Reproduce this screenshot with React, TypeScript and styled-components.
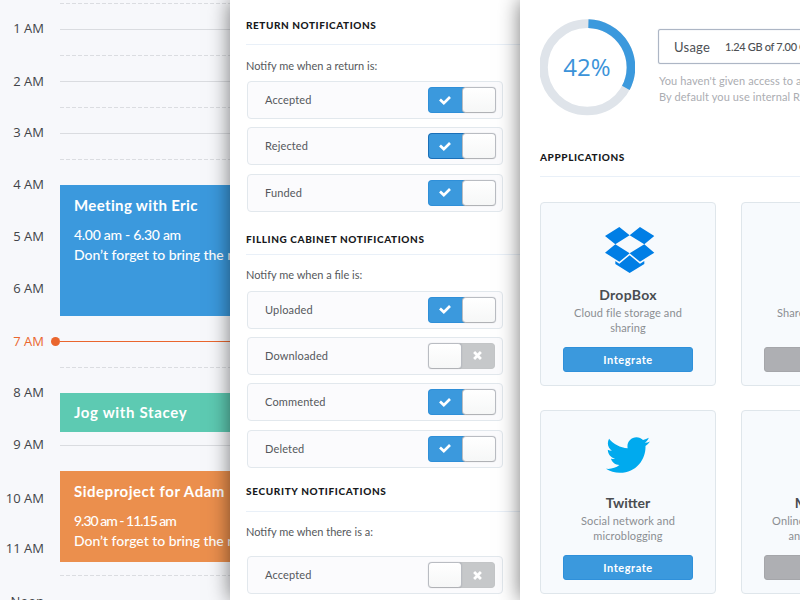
import React from 'react';
import styled, { createGlobalStyle } from 'styled-components';
import { FaTwitter } from 'react-icons/fa';

const GlobalStyle = createGlobalStyle`
  * { box-sizing: border-box; }
  body { margin: 0; background: #fff; overflow: hidden; }
`;

const Page = styled.main`
  display: flex;
  width: 800px;
  height: 600px;
  overflow: hidden;
  font-family: Lato, "Open Sans", sans-serif;
  color: #55585c;
`;

const Panel = styled.section<{ $width: number; $layer: number }>`
  position: relative;
  z-index: ${p => p.$layer};
  flex: 0 0 ${p => p.$width}px;
  width: ${p => p.$width}px;
  height: 600px;
  background: #fff;
  box-shadow: 0 0 20px rgba(0, 0, 0, 0.53);
`;

/* Calendar */

const CalendarPanel = styled(Panel)`
  display: flex;
  background: #f7f8fb;
  box-shadow: none;
`;

const Hours = styled.div`
  flex: 0 0 60px;
  height: 600px;
  overflow: hidden;
  padding: 19px 16px 0 0;
`;

const Hour = styled.div<{ $slot: number; $now?: boolean }>`
  height: ${p => p.$slot}px;
  font: 13px/18px "Open Sans", sans-serif;
  text-align: right;
  white-space: nowrap;
  color: ${p => (p.$now ? '#ea662e' : '#424448')};
`;

const Timeline = styled.div`
  flex: 1;
  min-width: 0;
  height: 600px;
  padding-top: 3px;
  display: grid;
  grid-template-columns: 100%;
  grid-template-rows: repeat(23, 26px);
`;

const Line = styled.div<{ $row: number; $dashed?: boolean }>`
  grid-area: ${p => p.$row} / 1;
  height: 1px;
  background: ${p =>
    p.$dashed ? 'repeating-linear-gradient(90deg, #dbdde1 0 4px, transparent 4px 6px)' : '#dadce0'};
`;

const NowMarker = styled.div`
  grid-area: 14 / 1;
  display: flex;
  align-items: center;
  height: 9px;
  margin: -4px 0 0 -9px;
`;

const NowDot = styled.span`
  width: 9px;
  height: 9px;
  border-radius: 50%;
  background: #ea662e;
`;

const NowLine = styled.span`
  flex: 1;
  height: 1px;
  background: #ea662e;
`;

const Event = styled.article<{ $row: number; $height: number; $color: string; $top: number }>`
  grid-area: ${p => p.$row} / 1;
  height: ${p => p.$height}px;
  padding: ${p => p.$top}px 0 0 14px;
  background: ${p => p.$color};
  color: #fff;
  white-space: nowrap;
  overflow: hidden;
`;

const EventTitle = styled.h3<{ $spacing: number }>`
  margin: 0 0 10px;
  font-size: 15px;
  line-height: 20px;
  font-weight: 700;
  letter-spacing: ${p => p.$spacing}px;
`;

const EventText = styled.p<{ $spacing: number }>`
  margin: 0;
  font-size: 14px;
  line-height: 20px;
  font-weight: 500;
  letter-spacing: ${p => p.$spacing}px;
`;

/* Notifications */

const NotificationPanel = styled(Panel)`
  padding-left: 16px;
`;

const Group = styled.div<{ $height: number }>`
  height: ${p => p.$height}px;
`;

const Heading = styled.h2<{ $pad: number; $height: number; $spacing: number }>`
  margin: 0;
  height: ${p => p.$height}px;
  padding-top: ${p => p.$pad}px;
  border-bottom: 1px solid #e9f0f8;
  font-size: 10px;
  line-height: 12px;
  font-weight: 900;
  letter-spacing: ${p => p.$spacing}px;
  color: #17191c;
`;

const Prompt = styled.p<{ $pad: number; $height: number }>`
  margin: 0;
  height: ${p => p.$height}px;
  padding-top: ${p => p.$pad}px;
  font-size: 11px;
  line-height: 14px;
  color: #55585c;
`;

const Options = styled.div`
  display: flex;
  flex-direction: column;
  gap: 8.4px;
  padding-left: 1px;
`;

const Option = styled.div`
  display: flex;
  align-items: center;
  justify-content: space-between;
  width: 256px;
  height: 38px;
  padding: 0 6px 0 17px;
  border: 1px solid #e2e8ed;
  border-radius: 4px;
  background: #fbfbfd;
  font-size: 11px;
  line-height: 14px;
  letter-spacing: 0.15px;
`;

const Switch = styled.span<{ $on: boolean }>`
  display: flex;
  flex-direction: ${p => (p.$on ? 'row' : 'row-reverse')};
  width: 68px;
  height: 26px;
  padding-right: ${p => (p.$on ? 0 : 1)}px;
`;

const SwitchTrack = styled.span<{ $on: boolean; $focused?: boolean }>`
  flex: 1;
  display: flex;
  align-items: center;
  justify-content: center;
  margin: ${p => (p.$on ? '0 -3px 0 0' : '0 0 0 -3px')};
  padding: ${p => (p.$on ? '0 5px 0 0' : '0 0 0 2px')};
  border: 1px solid ${p => (p.$on ? (p.$focused ? '#1a6fb8' : '#2f8fd8') : '#c3c5c7')};
  border-width: ${p => (p.$on ? '1px 0 1px 1px' : '1px 1px 1px 0')};
  border-radius: ${p => (p.$on ? '4px 0 0 4px' : '0 4px 4px 0')};
  background: ${p => (p.$on ? '#3b99dd' : '#c6c8ca')};
`;

const Knob = styled.span`
  z-index: 1;
  width: 34px;
  border: 1px solid #b9bcc2;
  border-bottom-color: #b0b2b6;
  border-radius: 4px;
  background: linear-gradient(#fff, #f6f7f7);
  box-shadow: 0 0 1px rgba(100, 105, 115, 0.4);
`;

const Glyph = styled.svg`
  display: block;
`;

/* Storage */

const StoragePanel = styled(Panel)`
  padding-left: 20px;
`;

const Usage = styled.div`
  display: flex;
  height: 145px;
  padding-top: 19px;
  overflow: hidden;
`;

const Donut = styled.div`
  display: grid;
  flex: 0 0 96px;
  width: 96px;
  height: 97px;
  margin: 0 1px 0 -1px;
  place-items: center;
  > * { grid-area: 1 / 1; }
`;

const Percent = styled.span`
  font: 24px/30px "Open Sans", sans-serif;
  color: #3b93d9;
  padding-bottom: 2px;
`;

const UsageInfo = styled.div`
  flex: 1;
  min-width: 0;
  padding: 10px 0 0 22px;
  white-space: nowrap;
`;

const UsageBox = styled.div`
  display: flex;
  align-items: center;
  width: 180px;
  height: 35px;
  padding: 0 0 0 15px;
  border: 1.5px solid #adb6c5;
  border-radius: 2px;
  box-shadow: inset 0 0 1px #adb6c5, 0 0 1px #adb6c5;
  color: #4d5054;
`;

const UsageLabel = styled.span`
  width: 51px;
  font-size: 13px;
  letter-spacing: 0.25px;
`;

const UsageValue = styled.span`
  font-size: 11px;
  letter-spacing: -0.34px;
  font-weight: 500;
`;

const Hint = styled.p`
  margin: 9px 0 0 1px;
  font-size: 11px;
  line-height: 16px;
  letter-spacing: 0.1px;
  color: #abadb2;
`;

const Cards = styled.div`
  display: grid;
  grid-template-columns: 176px 176px;
  grid-auto-rows: 184px;
  gap: 24px 25px;
  padding-top: 25px;
`;

const Card = styled.article`
  display: flex;
  flex-direction: column;
  align-items: center;
  padding-top: 21px;
  border: 1px solid #dfe6eb;
  border-radius: 4px;
  background: #f7fafd;
  white-space: nowrap;
`;

const Logo = styled.div<{ $right?: number; $lift?: number }>`
  display: flex;
  align-items: center;
  justify-content: center;
  height: 52px;
  margin-left: ${p => p.$right ?? 0}px;
  padding-bottom: ${p => p.$lift ?? 0}px;
`;

const CardTitle = styled.h3<{ $spacing: number }>`
  margin: 10px 0 0;
  font-size: 14px;
  line-height: 18px;
  font-weight: 700;
  letter-spacing: ${p => p.$spacing}px;
  color: #4a4d51;
`;

const CardText = styled.p`
  margin: 2px 0 0;
  height: 41px;
  font-size: 11px;
  line-height: 14.6px;
  letter-spacing: 0.12px;
  text-align: center;
  color: #8b8e92;
`;

const CardButton = styled.button<{ $muted?: boolean }>`
  width: 130px;
  height: 25px;
  padding: 0 0 1px;
  border: 1px solid ${p => (p.$muted ? '#a5a6aa' : '#2f90da')};
  border-radius: 3px;
  background: ${p => (p.$muted ? '#aeafb3' : '#3b99dd')};
  color: #fff;
  font: 700 11px/21px Lato, sans-serif;
  letter-spacing: 0.55px;
`;

const hours: { label: string; slot: number; now?: boolean }[] = [
  { label: '1 AM', slot: 53 },
  { label: '2 AM', slot: 51 },
  { label: '3 AM', slot: 52 },
  { label: '4 AM', slot: 52 },
  { label: '5 AM', slot: 52 },
  { label: '6 AM', slot: 53 },
  { label: '7 AM', slot: 51, now: true },
  { label: '8 AM', slot: 52 },
  { label: '9 AM', slot: 54 },
  { label: '10 AM', slot: 50 },
  { label: '11 AM', slot: 53 },
  { label: 'Noon', slot: 52 },
];

const solidRows = [2, 4, 6, 18];
const dashedRows = [1, 3, 5, 7, 15, 23];

interface Choice {
  label: string;
  on: boolean;
  focused?: boolean;
}

const Check = () => (
  <Glyph width="12" height="9" viewBox="0 0 12 9" fill="none" stroke="#fff" strokeWidth="2.7">
    <path d="M1 3.6 4.8 7.1 11 1" />
  </Glyph>
);

const Cross = () => (
  <Glyph width="9" height="9" viewBox="0 0 9 9" fill="none" stroke="#fff" strokeWidth="2.8">
    <path d="M1.1 1.1 7.9 7.9M7.9 1.1 1.1 7.9" />
  </Glyph>
);

const Choices = ({ items }: { items: Choice[] }) => (
  <Options>
    {items.map(item => (
      <Option key={item.label}>
        {item.label}
        <Switch $on={item.on}>
          <SwitchTrack $on={item.on} $focused={item.focused}>
            {item.on ? <Check /> : <Cross />}
          </SwitchTrack>
          <Knob />
        </Switch>
      </Option>
    ))}
  </Options>
);

const DropboxLogo = () => (
  <svg width="49.3" height="46" viewBox="0 0 148 138" fill="#007ee5">
    <path d="M43 0 74 25 31 52 0 27ZM105 0 148 27 118 52 74 25ZM31 52 74 79 43 104 0 77ZM118 52 148 77 105 104 74 79Z" />
    <path d="M74 85 105 110 118 102V111L74 138 31 111V102L43 110Z" />
  </svg>
);

export default function App() {
  return (
    <>
      <GlobalStyle />
      <Page>
        <CalendarPanel $width={230} $layer={1}>
          <Hours>
            {hours.map(h => (
              <Hour key={h.label} $slot={h.slot} $now={h.now}>
                {h.label}
              </Hour>
            ))}
          </Hours>
          <Timeline>
            {solidRows.map(r => (
              <Line key={r} $row={r} />
            ))}
            {dashedRows.map(r => (
              <Line key={r} $row={r} $dashed />
            ))}
            <Event $row={8} $height={131} $top={10} $color="#3b99dd">
              <EventTitle $spacing={0.36}>Meeting with Eric</EventTitle>
              <EventText $spacing={-0.29}>4.00 am - 6.30 am</EventText>
              <EventText $spacing={-0.03}>Don’t forget to bring the notes</EventText>
            </Event>
            <NowMarker>
              <NowDot />
              <NowLine />
            </NowMarker>
            <Event $row={16} $height={39} $top={9} $color="#5dcab2">
              <EventTitle $spacing={0.66}>Jog with Stacey</EventTitle>
            </Event>
            <Event $row={19} $height={91} $top={10} $color="#eb8f4d">
              <EventTitle $spacing={0.52}>Sideproject for Adam</EventTitle>
              <EventText $spacing={-1}>9.30 am - 11.15 am</EventText>
              <EventText $spacing={-0.03}>Don’t forget to bring the notes</EventText>
            </Event>
          </Timeline>
        </CalendarPanel>

        <NotificationPanel $width={290} $layer={2}>
          <Group $height={211}>
            <Heading $pad={19} $height={45} $spacing={0.56}>RETURN NOTIFICATIONS</Heading>
            <Prompt $pad={14} $height={36}>Notify me when a return is:</Prompt>
            <Choices
              items={[
                { label: 'Accepted', on: true },
                { label: 'Rejected', on: true, focused: true },
                { label: 'Funded', on: true },
              ]}
            />
          </Group>
          <Group $height={256}>
            <Heading $pad={22} $height={44} $spacing={0.6}>FILLING CABINET NOTIFICATIONS</Heading>
            <Prompt $pad={13} $height={35.6}>Notify me when a file is:</Prompt>
            <Choices
              items={[
                { label: 'Uploaded', on: true },
                { label: 'Downloaded', on: false },
                { label: 'Commented', on: true },
                { label: 'Deleted', on: true },
              ]}
            />
          </Group>
          <Group $height={133}>
            <Heading $pad={18} $height={45} $spacing={0.66}>SECURITY NOTIFICATIONS</Heading>
            <Prompt $pad={13} $height={44}>Notify me when there is a:</Prompt>
            <Choices items={[{ label: 'Accepted', on: false }]} />
          </Group>
        </NotificationPanel>

        <StoragePanel $width={280} $layer={3}>
          <Usage>
            <Donut>
              <svg width="96" height="97" viewBox="0 0 96 97" fill="none" strokeWidth="8.6">
                <circle cx="48.2" cy="48.3" r="43.7" stroke="#dfe4ea" />
                <path d="M49.4 4.6A43.7 43.7 0 0 1 86.8 68.9" stroke="#3b99dd" />
              </svg>
              <Percent>42%</Percent>
            </Donut>
            <UsageInfo>
              <UsageBox>
                <UsageLabel>Usage</UsageLabel>
                <UsageValue>1.24 GB of 7.00 GB</UsageValue>
              </UsageBox>
              <Hint>
                You haven't given access to any
                <br />
                By default you use internal R
              </Hint>
            </UsageInfo>
          </Usage>
          <Heading $pad={6} $height={32} $spacing={0.58}>APPPLICATIONS</Heading>
          <Cards>
            <Card>
              <Logo $right={4}>
                <DropboxLogo />
              </Logo>
              <CardTitle $spacing={0.3}>DropBox</CardTitle>
              <CardText>
                Cloud file storage and
                <br />
                sharing
              </CardText>
              <CardButton>Integrate</CardButton>
            </Card>
            <Card>
              <Logo />
              <CardTitle $spacing={0}>Box</CardTitle>
              <CardText>
                Share files and photo
                <br />
                albums
              </CardText>
              <CardButton $muted>Integrate</CardButton>
            </Card>
            <Card>
              <Logo $lift={6}>
                <FaTwitter size={44} color="#00aaee" />
              </Logo>
              <CardTitle $spacing={0}>Twitter</CardTitle>
              <CardText>
                Social network and
                <br />
                microblogging
              </CardText>
              <CardButton>Integrate</CardButton>
            </Card>
            <Card>
              <Logo />
              <CardTitle $spacing={0.1}>MailChimp</CardTitle>
              <CardText>
                Online email marketing
                <br />
                and newsletters.
              </CardText>
              <CardButton $muted>Integrate</CardButton>
            </Card>
          </Cards>
        </StoragePanel>
      </Page>
    </>
  );
}
